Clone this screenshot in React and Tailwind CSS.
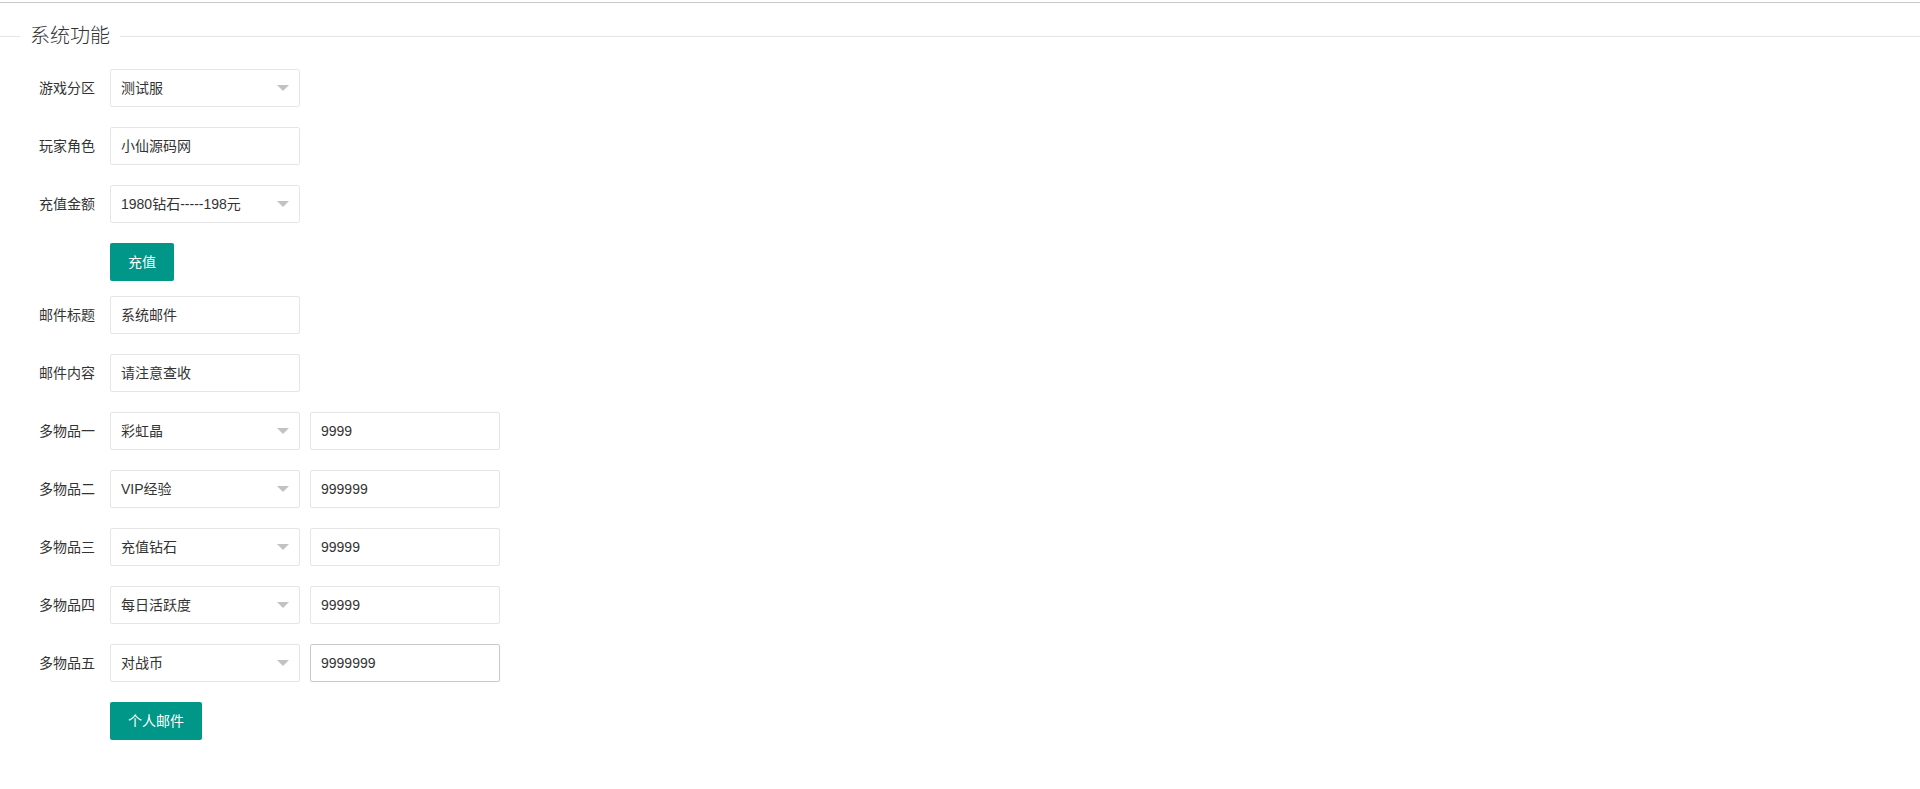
const font = { fontFamily: '"Liberation Sans", "Noto Sans CJK SC", sans-serif' };

function Label({ children }) {
  return (
    <div className="w-[110px] shrink-0 pr-[15px] text-right text-[14px] leading-[20px] text-[#333]">
      {children}
    </div>
  );
}

function Select({ value }) {
  return (
    <div className="relative flex h-[38px] w-[190px] items-center rounded-[2px] border border-[#e6e6e6] bg-white pl-[10px] pr-[30px] text-[14px] text-[#333]">
      <span className="truncate">{value}</span>
      <span className="absolute right-[10px] top-1/2 -mt-[3px] h-0 w-0 border-x-[6px] border-t-[6px] border-x-transparent border-t-[#c2c2c2]" />
    </div>
  );
}

function Input({ value, active }) {
  return (
    <div
      className={
        "flex h-[38px] w-[190px] items-center rounded-[2px] border bg-white pl-[10px] text-[14px] text-[#333] " +
        (active ? "border-[#c9c9c9]" : "border-[#e6e6e6]")
      }
    >
      {value}
    </div>
  );
}

function Row({ label, children }) {
  return (
    <div className="mb-[20px] flex h-[38px] items-center">
      <Label>{label}</Label>
      <div className="flex gap-[10px]">{children}</div>
    </div>
  );
}

function Btn({ children }) {
  return (
    <div className="mb-[15px] flex pl-[110px]">
      <button className="h-[38px] rounded-[2px] bg-[#009688] px-[18px] text-[14px] text-white">
        {children}
      </button>
    </div>
  );
}

const items = [
  ["多物品一", "彩虹晶", "9999"],
  ["多物品二", "VIP经验", "999999"],
  ["多物品三", "充值钻石", "99999"],
  ["多物品四", "每日活跃度", "99999"],
  ["多物品五", "对战币", "9999999"],
];

export default function App() {
  return (
    <div className="min-h-screen w-full bg-white" style={font}>
      <div className="pt-[2px]">
        <div className="h-px bg-[#c8c8c8]" />
      </div>
      <div className="mt-[19px] flex h-[28px] items-center">
        <div className="h-px w-[20px] bg-[#e6e6e6]" />
        <div className="px-[10px] text-[20px] font-light leading-[28px] text-[#333]">系统功能</div>
        <div className="h-px flex-1 bg-[#e6e6e6]" />
      </div>
      <div className="mt-[19px] flex flex-col">
        <Row label="游戏分区">
          <Select value="测试服" />
        </Row>
        <Row label="玩家角色">
          <Input value="小仙源码网" />
        </Row>
        <Row label="充值金额">
          <Select value="1980钻石-----198元" />
        </Row>
        <Btn>充值</Btn>
        <Row label="邮件标题">
          <Input value="系统邮件" />
        </Row>
        <Row label="邮件内容">
          <Input value="请注意查收" />
        </Row>
        {items.map(([label, sel, num], i) => (
          <Row key={label} label={label}>
            <Select value={sel} />
            <Input value={num} active={i === items.length - 1} />
          </Row>
        ))}
        <Btn>个人邮件</Btn>
      </div>
    </div>
  );
}
